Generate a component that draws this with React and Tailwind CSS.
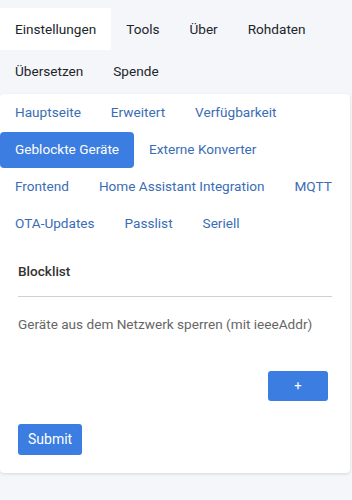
import React, { useState } from 'react';

const topTabs = [
  ['Einstellungen', 'Tools', 'Über', 'Rohdaten'],
  ['Übersetzen', 'Spende'],
];

const subTabs = [
  ['Hauptseite', 'Erweitert', 'Verfügbarkeit'],
  ['Geblockte Geräte', 'Externe Konverter'],
  ['Frontend', 'Home Assistant Integration', 'MQTT'],
  ['OTA-Updates', 'Passlist', 'Seriell'],
];

const App = () => {
  const [tab, setTab] = useState('Einstellungen');
  const [sub, setSub] = useState('Geblockte Geräte');

  return (
    <div className="min-h-[500px] bg-[#f5f6fa] font-['Roboto',sans-serif] text-[13.6px]">
      {/* top tabs */}
      <div className="pt-[8px]">
        {topTabs.map((row, i) => (
          <div key={i} className="flex h-[42px] items-center">
            {row.map((t) => (
              <button
                key={t}
                onClick={() => setTab(t)}
                className={`h-full whitespace-nowrap px-[15px] text-[#212529] ${tab === t ? 'bg-white' : ''}`}
              >
                {t}
              </button>
            ))}
          </div>
        ))}
      </div>

      {/* card */}
      <div className="mr-[2px] mt-[2px] rounded-[4px] bg-white pb-[18px] shadow-[0_1px_3px_rgba(0,0,0,0.12)]">
        <div className="flex flex-col">
          {subTabs.map((row, i) => (
            <div key={i} className="flex h-[37px] items-center">
              {row.map((t) => (
                <button
                  key={t}
                  onClick={() => setSub(t)}
                  className={`h-[36px] whitespace-nowrap rounded-[4px] px-[15px] ${
                    sub === t ? 'bg-[#3b7de0] text-white' : 'text-[#3a6db5]'
                  }`}
                >
                  {t}
                </button>
              ))}
            </div>
          ))}
        </div>

        <div className="px-[18px] pt-[19px]">
          <div className="border-b border-[#d0d0d0] pb-[15px] font-medium text-[#333]">Blocklist</div>
          <p className="mt-[17px] text-[#666]">Geräte aus dem Netzwerk sperren (mit ieeeAddr)</p>
          <div className="mt-[36px] flex justify-end pr-[4px]">
            <button className="h-[30px] w-[60px] rounded-[3px] bg-[#3b7de0] text-[13px] text-white">+</button>
          </div>
          <button className="mt-[23px] h-[31px] rounded-[3px] bg-[#3b7de0] px-[10px] text-[14px] text-white">Submit</button>
        </div>
      </div>
    </div>
  );
};

export default App;
